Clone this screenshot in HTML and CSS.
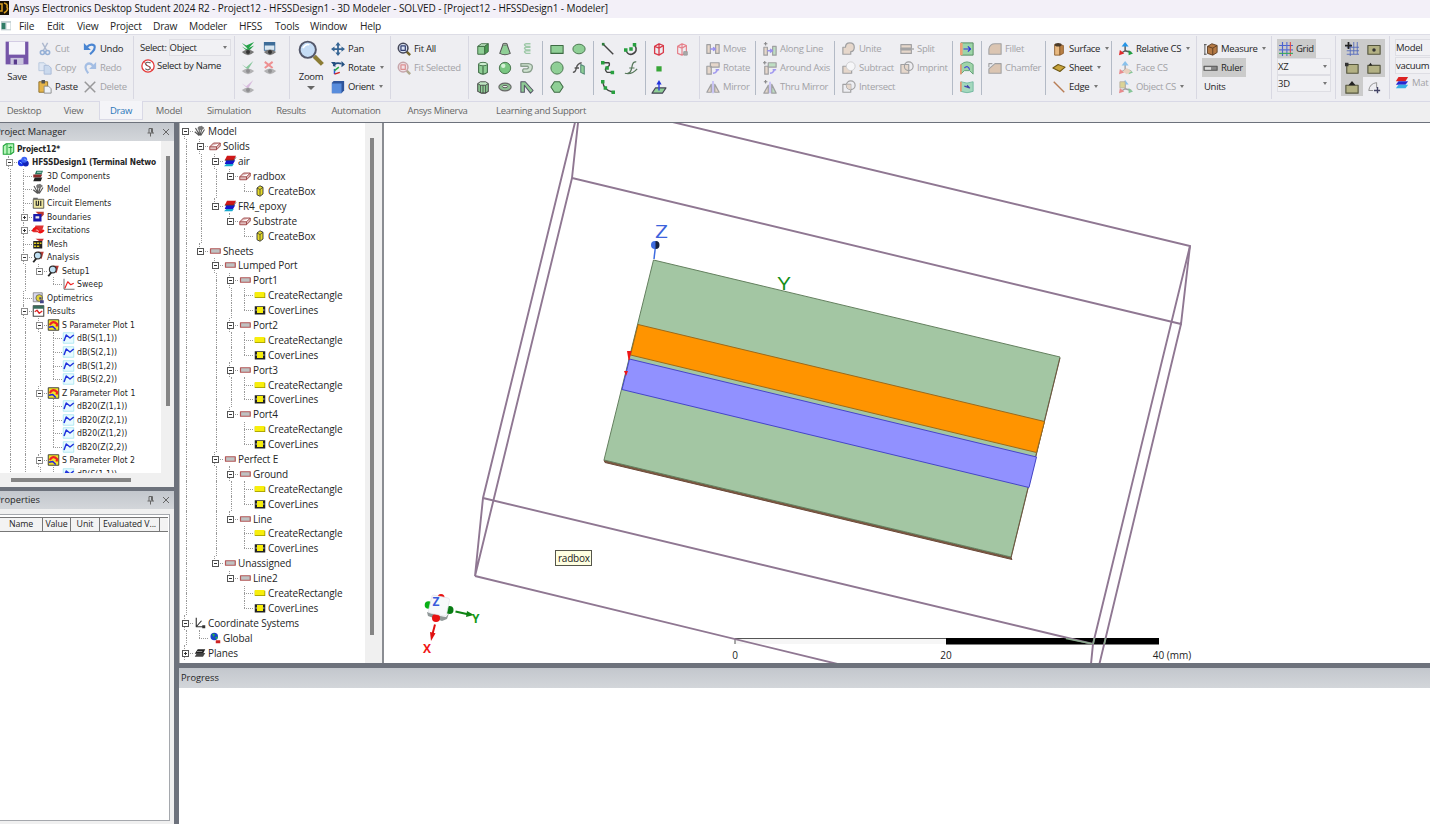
FILE: index.html
```html
<!DOCTYPE html>
<html lang="en">
<head>
<meta charset="utf-8">
<title>Ansys Electronics Desktop Student 2024 R2</title>
<link rel="stylesheet" href="styles.css">
</head>
<body>
<header class="titlebar"><svg class="applogo" viewBox="0 0 9 14"><path d="M0 0h9v14H0z" fill="#171006"/><path d="M0 3h2v7H0M4 2q4 1 3 4q2 3-3 6" fill="none" stroke="#d59b22" stroke-width="1.6"/></svg><span data-fit="595">Ansys Electronics Desktop Student 2024 R2 - Project12 - HFSSDesign1 - 3D Modeler - SOLVED - [Project12 - HFSSDesign1 - Modeler]</span></header>
<nav class="menubar" data-ref="Modeler" data-refw="38"></nav>
<section class="ribbon" data-ref="Select by Name" data-refw="64"></section>
<nav class="tabs" data-ref="Learning and Support" data-refw="90"></nav>
<main class="work">
  <aside class="left">
    <section class="panel pm">
      <h2 class="phead"><span>Project Manager</span><svg viewBox="0 0 26 10"><path d="M4 1.500h3.500v4.500M4 1.500v4.500M2.500 6h6.500M5.500 6v3.500M6.500 1.500v4"/><path d="M18 2l6 6M24 2l-6 6"/></svg></h2>
      <div class="pmbody">
        <div class="tree pmtree" data-ref="S Parameter Plot 1" data-refw="73"></div>
        <div class="vbar"><i></i></div>
        <div class="hbar"><i></i></div>
      </div>
    </section>
    <section class="panel props">
      <h2 class="phead"><span>Properties</span><svg viewBox="0 0 26 10"><path d="M4 1.500h3.500v4.500M4 1.500v4.500M2.500 6h6.500M5.500 6v3.500M6.500 1.500v4"/><path d="M18 2l6 6M24 2l-6 6"/></svg></h2>
      <div class="pbody">
        <div class="thead"><span class="c1">Name</span><span class="c2">Value</span><span class="c3">Unit</span><span class="c4">Evaluated V...</span><span class="c5"></span></div>
      </div>
    </section>
  </aside>
  <div class="right">
    <div class="editor">
      <div class="modelpane">
        <div class="tree mtree" data-ref="CreateRectangle" data-refw="74.500"></div>
        <div class="vbar"><i></i></div>
      </div>
      <svg class="view" viewBox="384 123 1046 540">
        <g class="board">
          <path d="M604 460L1011 557.500L1012 559.500L605 462.500Z" fill="#7d5940" stroke="#6b4a3a"/>
          <path d="M653.500 260L1060 357L1011 557L604 460Z" fill="#a3c6a3" stroke="#64805f"/>
          <path d="M1060 358L1011 558" stroke="#71553f" fill="none"/>
          <path d="M638 324.500L1044.500 421.500L1036.500 452.500L630.500 355Z" fill="#ff9400" stroke="#9a6a1c"/>
          <path d="M629.500 359L1036.500 457L1029 487.500L622 389.500Z" fill="#9191ff" stroke="#4646c8"/>
          <path d="M627 351h4.500l-2 9h-1zM624 371h4l-2 5z" fill="#f01616"/>
        </g>
        <path class="dir z" d="M654 259L655.500 246"/>
        <circle cx="655" cy="245" r="4" fill="#3d6be0"/><path d="M655.500 241a4 4 0 0 1 0 8z" fill="#16213f"/>
        <text x="655" y="238" class="ax zc" textLength="13" lengthAdjust="spacingAndGlyphs">Z</text>
        <text x="777.500" y="290" class="ax yc" textLength="13" lengthAdjust="spacingAndGlyphs">Y</text>
        <path d="M735 638.500H946V644H735z" fill="#f6f6f6"/>
        <path d="M735 644V638.500H946" fill="none" stroke="#555"/>
        <path d="M946 638H1159V644.500H946z"/>
        <g class="wire">
          <path d="M580.500 100L572 178L1181 324L1190 246L580.500 100L483 498L475 576L572 178"/>
          <path d="M1190 246L1093 644L1085 724L1181 324"/>
          <path d="M483 498L1093 644M475 576L1085 724"/>
        </g>
        <path d="M1066 638.500L1092 643.800" stroke="#88a98b" stroke-width="1.500"/>
        <path d="M1094.500 638l-1.500 6M1105.700 638l-1.500 6" stroke="#88a98b" stroke-width="1.500"/>
        <g class="rl" text-anchor="middle"><text x="735" y="659">0</text><text x="946" y="659">20</text><text x="1172" y="659">40 (mm)</text></g>
        <rect x="555.500" y="550.500" width="36" height="15" fill="#ffffe1" stroke="#55554a"/>
        <text x="558" y="562" class="tip" textLength="32">radbox</text>
        <g>
          <circle cx="428.500" cy="605" r="3.800" fill="#08b016"/><circle cx="441" cy="597.500" r="3.500" fill="#e81212"/>
          <circle cx="449.500" cy="610" r="4" fill="#087c14"/><path d="M427 612l13 4 6 1 3-4-2 6-5 2-14-5z" fill="#8f9797"/>
          <circle cx="436" cy="618" r="4" fill="#e81212"/>
          <path d="M433 595l15 3q2 .5 1.500 2.500l-3 14q-.5 2-2.500 1.500l-14-3q-2-.5-1.500-2.500l3-13q.5-2.500 1.500-2.500z" fill="#f7f9fb" stroke="#dfe3e8" stroke-width=".7"/>
          <text x="432.500" y="606" class="cube">Z</text>
          <path d="M455.500 611.500L469 614.500" stroke="#108414" stroke-width="2"/><path d="M467 611l7 4-8 2z" fill="#108414"/>
          <text x="472" y="622.500" class="tri" fill="#129a18">Y</text>
          <path d="M435 624.500L432.500 634" stroke="#e01010" stroke-width="2"/><path d="M430 632l5.500 1.200L431 641z" fill="#e01010"/>
          <text x="423" y="653" class="tri" fill="#f01414">X</text>
        </g>
      </svg>
    </div>
    <section class="progress"><h2 class="phead"><span>Progress</span></h2></section>
  </div>
</main>
<script src="app.js"></script>
</body>
</html>
```

FILE: styles.css
```css
*{box-sizing:border-box}
html,body{margin:0;height:100%}
body{width:1430px;height:824px;overflow:hidden;display:flex;flex-direction:column;font:9.5px "Open Sans","Noto Sans",sans-serif;color:#252525;background:#fff}
svg{display:block;flex:none;overflow:visible}
.titlebar{height:18px;flex:none;background:#f3f0f8;display:flex;align-items:center;gap:4px;font-size:10px;white-space:nowrap;color:#151515;padding-bottom:2px}
.applogo{width:9px;height:14px}
.menubar{height:16px;flex:none;background:#fff;display:flex;align-items:center;font-size:10.2px}
.menubar svg{width:12px;height:10px;margin-right:7px}
.ribbon{height:68px;flex:none;background:#eeeef2;border-top:1px solid #dddde6;border-bottom:1px solid #d9d9e6;display:flex;padding-top:4px;white-space:nowrap}
.col{flex:none;display:flex;flex-direction:column}
.item{height:19px;display:flex;align-items:center;gap:3px}
.item svg,.icon{width:14px;height:14px}
.item.off{color:#a2a2a6}
.item.off svg{opacity:.5}
.item i{border:2px solid transparent;border-top:3px solid #777;border-bottom:0;margin:-1px 0 0 1.500px}
.sep,.gsep{flex:none}
.sep::before{content:"";display:block;width:1px;height:54px;background:#b3bac6;margin-top:2px}
.gsep::before{content:"";display:block;width:1px;height:63px;background:#d8d8e2;margin-top:-3px}
.big{align-items:center;padding-top:1px}
.big svg{width:26px;height:26px}
.big span{margin-top:4px}
.big i{border:4px solid transparent;border-top:4px solid #666;border-bottom:0;margin-top:3px}
.select{display:flex;align-items:center;height:17px}
.combo{display:flex;align-items:center;justify-content:space-between;height:17px;border:1px solid #dedee4;background:#f1f1f4;padding:0 3px 0 0}
.combo i{border:2px solid transparent;border-top:3px solid #777;border-bottom:0}
.select .combo{width:62px;margin-left:2px}
.byname{margin:0 0 0 1px}
.byname span{margin-left:-1px}
.hl{background:#cbcbcb}
.gridcol .item.hl{width:39px;padding-left:2px}
.gridcol .combo{width:54px}
.ruler{width:44px;margin-left:-2px;padding-left:2px}
.pads{display:grid;grid-template-columns:22px 22px}
.pads b{height:19px;display:flex;align-items:center;justify-content:center}
.matcol{gap:1px}
.matcol .combo{width:50px;height:17px}
.matcol .item{height:15px}
.tabs{height:20px;flex:none;background:#efeff0;display:flex;color:#666;font-size:9.500px;white-space:nowrap;line-height:17px;text-align:center}
.tabs span{flex:none}
.tabs .on{color:#2a76b8;background:#f4f4f8;border:1px solid #d9d9e6;border-top:0;margin-top:-1px;height:19px;line-height:19px}
.work{flex:1;min-height:0;display:flex;background:#6d727c}
.left{width:174px;margin-right:5px;display:flex;flex-direction:column;gap:4px;padding-top:1px}
.panel{background:#f0f0f0;display:flex;flex-direction:column}
.pm{height:364px}
.props{flex:1}
.phead{margin:0;height:18px;flex:none;font:inherit;font-size:9.300px;background:linear-gradient(#c3c7cd,#d3d6da);display:flex;align-items:center;justify-content:space-between;padding:0 3px 1px 2px}
.phead svg{width:26px;height:10px;fill:none;stroke:#666;stroke-width:1}
.left .phead span{margin-left:-7px}
.pmbody{display:grid;grid-template-columns:161px 13px;grid-template-rows:332px 14px}
.pmtree{background:#fff;font:8.600px "DejaVu Sans Condensed","DejaVu Sans",sans-serif;--row:13.55px;--start:2px;padding-top:1px}
.tree{overflow:hidden}
.row{height:var(--row);display:flex;align-items:center;white-space:nowrap}
.row::before{content:"";width:var(--start);flex:none;margin-left:var(--pull,0)}
.row.b span{font-weight:bold;font-size:8.300px;letter-spacing:-.12px}
.row .icon{margin-right:2px;width:13px;height:12px}
.cell{width:15px;align-self:stretch;flex:none;display:grid;grid-template:1fr 1fr/1fr 1fr;position:relative}
.cell.up::before{content:"";grid-area:1/2;border-left:1px dotted #999}
.cell.dn::after{content:"";grid-area:2/2;border-left:1px dotted #999}
.cell u{grid-area:2/2;border-top:1px dotted #999;height:1px;width:9px}
.cell b{position:absolute;left:4px;top:calc(50% - 3px);width:7px;height:7px;border:1px solid #8d8d8d;background:linear-gradient(#333,#333) center/3px 1px no-repeat #fff}
.cell b.plus{background:linear-gradient(#333,#333) center/3px 1px no-repeat,linear-gradient(#333,#333) center/1px 3px no-repeat,#fff}
.vbar{padding:15px 0 0 5px}
.pm .vbar i{display:block;width:4px;height:250px;background:#858585}
.hbar{padding:5px 0 0 11px;grid-column:1/3}
.hbar i{display:block;width:120px;height:4px;background:#858585}
.pbody{flex:1;background:#fff;margin:5px 4px 3px 0;border:1px solid #a5a8ad;border-left:0;padding-top:2px}
.thead{display:flex;height:15px;font-size:8.800px;background:#f3f3f3;border:1px solid #777;border-left:0;border-right:0;text-align:center;line-height:13px;white-space:nowrap;width:168px}
.thead span{border-right:1px solid #777;letter-spacing:-.1px}
.c1{width:43px}.c2{width:28px}.c3{width:29px}.c4{width:60px}.thead .c5{border:0}
.right{flex:1;min-width:0;display:flex;flex-direction:column;gap:5px;padding-top:1px}
.editor{height:540px;display:flex;background:#fff;border-left:1px solid #bbb}
.modelpane{width:204px;flex:none;display:flex;background:#f0f0f0;border-right:2px solid #8a8d92}
.mtree{width:185px;background:#fff;font-size:10px;--row:14.900px;--start:0px;--pull:-2px;padding-top:1px}
.mtree .cell b{border-color:#555}
.mtree .row .icon{margin-right:1px;width:14px}
.modelpane .vbar i{display:block;width:4px;height:497px;background:#858585}
.view{width:1046px;height:540px;overflow:hidden}
.board path{stroke-width:1}
.wire{fill:none;stroke:#8f7792;stroke-width:1.900}
.dir{stroke:#3d6be0;stroke-width:1.500}
.ax{font:19px "Open Sans",sans-serif}
.zc{fill:#3d63dc}.yc{fill:#159018}
.cube{font:bold 12px "Open Sans",sans-serif;fill:#3a5bdc}
.tri{font:bold 12px "Open Sans",sans-serif}
.rl{font:10px "Open Sans",sans-serif;fill:#222}
.tip{font:10px "Open Sans",sans-serif;fill:#222}
.progress{flex:1;background:#fff}
.progress .phead{height:20px}
```

FILE: app.js
```js
const G = '#8fcf96', D = '#3e6b44';
const line = (d, c = '#555', w = 1.3, f = 'none') => `<path d="${d}" fill="${f}" stroke="${c}" stroke-width="${w}" stroke-linejoin="round"/>`;
const fill = (d, c) => `<path d="${d}" fill="${c}"/>`;
const eye = fill('M1 11.500q7-6 14 0q-7 7-14 0', '#777') + '<circle cx="8" cy="11.500" r="2.300" fill="#333"/>';
const tan = '#e0c2a5';
const cs = line('M7 10V2M7 10l7 2M7 10l-5 3', '#555', 1.6) + fill('M7 0l4 5H3z', '#2596e8') + fill('M16 13l-5-4v6z', '#20a040') + fill('M0 15l1-6 5 4z', '#e32a2a');
const box3 = (a, b, c) => line('M2 5l4-3h8l-4 3z', a, 1.1, '#c4ecc7') + line('M2 5h8v9H2z', a, 1.1, c) + line('M10 5l4-3v9l-4 3z', a, 1.1, b);
const ICONS = {
  save: fill('M1 1h14v14H1z', '#7555a8') + fill('M3 1h10v8H3z', '#f5f5fa') + fill('M4 11h8v4H4z', '#c9c4dd') + fill('M6 12h2v3H6z', '#57398b'),
  cut: line('M5 1l5 9M11 1L6 10', '#6d83ac', 1.6) + '<circle cx="5" cy="12" r="2.300" fill="none" stroke="#3e73bb" stroke-width="1.800"/><circle cx="11" cy="12" r="2.300" fill="none" stroke="#3e73bb" stroke-width="1.800"/>',
  copy: line('M1 2h6l2 2v7H1z', '#7d9fc8', 1, '#cfe0f4') + line('M7 5h5l3 3v7H7z', '#6286bb', 1, '#a7c5ea'),
  paste: line('M1 2h10v12H1z', '#8a6a25', 1, '#e6b54b') + fill('M4 0h4v4H4z', '#555') + line('M7 7h5l3 3v5H7z', '#888', 1, '#eef2f8'),
  undo: line('M4 6q5-5 9-2q2 4-5 10', '#4a85d2', 2.500) + fill('M1 1v8h8z', '#4a85d2'),
  redo: line('M12 6Q8 1 4 4q-3 4 2 10', '#5d90d8', 2.500) + fill('M15 1v8H7z', '#5d90d8'),
  del: line('M2 2l12 12M14 2L2 14', '#444', 1.700),
  sname: '<circle cx="8" cy="8" r="7" fill="#fff" stroke="#e43b3b" stroke-width="1.500"/>' + line('M11 4.500q-5-2-6 1q1 2 3 2.500q4 1 2 3.500q-3 2-5-.5', '#666', 1.400) + line('M3 3l10 10', '#e43b3b', .8),
  eyeA: fill('M1 1l5 3 9-4-7 8z', '#22a247') + fill('M1 5l5 3 9-4-7 7z', '#22a247') + eye,
  eyeB: fill('M1 0h13v10H1z', '#3d6c98') + fill('M2 4h11v5H2z', '#dae7f1') + eye,
  eyeC: fill('M1 4l5 3 8-7-6 10z', '#22a247') + eye, eyeD: line('M2 1l9 7M11 1L2 8', '#e33', 2.2) + eye, eyeE: fill('M1 4l5 3 8-7-6 10z', '#c48acc') + eye,
  zoom: line('M10 10l5 5', '#8b7c35', 2.600) + '<circle cx="6" cy="6" r="5" fill="#c5dcf5" stroke="#53576a" stroke-width="1.200"/>' + line('M3 5q2-3 4-2', '#fff', 1),
  pan: line('M8 2v12M2 8h12', '#356493', 2) + fill('M8 0l3 4H5zM8 16l3-4H5zM0 8l4-3v6zM16 8l-4-3v6z', '#356493'),
  rot: line('M3 6q1-5 9-3', '#234f80', 2) + fill('M0 1h5v6zM12 0l4 4-4 3z', '#234f80') + line('M4 15V9', '#2b55dc', 1.700) + line('M4 15l6-2', '#c22', 1.700) + line('M4 11l5-4', '#2a4', 1.500),
  orient: fill('M3 1h12v11l-3 3H1V3z', '#2f559b') + fill('M1 4h11v11H1z', '#588cdc'),
  fit: line('M11 11l4 4', '#73642b', 2.800) + '<circle cx="7" cy="7" r="5.500" fill="#dbe4f5" stroke="#454759" stroke-width="1.800"/>' + line('M4.500 4.500h5v5h-5z', '#333f72', 1.400),
  fits: line('M11 11l4 4', '#73642b', 2.800) + '<circle cx="7" cy="7" r="5.500" fill="#f3d5dc" stroke="#a06067" stroke-width="1.800"/>' + line('M4.500 4.500h5v5h-5z', '#c33', 1.400),
  box: box3(D, '#4b9c53', G), cone: line('M6 2h4l4 11q-6 3-12 0z', '#555', 1.2, G) + '<ellipse cx="8" cy="2.500" rx="2.500" ry="1" fill="#d3efd5" stroke="#555"/>',
  helix: line('M12 2H7q-4 1 0 3h5M12 6H7q-4 1 0 3h5M12 10H7q-4 1 0 3h5', '#9fc9a9', 1.500),
  cyl: line('M3 3v10q5 4 10 0V3', D, 1.2, G) + '<ellipse cx="8" cy="3.500" rx="5" ry="2" fill="#cdeed0" stroke="#3e6b44"/>' + line('M8 6v9', D),
  sph: '<circle cx="8" cy="8" r="6.500" fill="#79c681" stroke="#3e6b44"/><circle cx="6" cy="5.500" r="2.500" fill="#d5f2d7"/>',
  spiral: line('M1 3h9q5 1 4 5q-1 5-6 5H4q-2-2 0-4h4q3-1 1-3H1z', '#8a9f8d', 1.500, '#cfe3d1'),
  prism: line('M2 4v9l4 2h5l3-2V4', '#444', 1.2, G) + line('M2 4l3-2h6l3 2-3 2H5zM5 6v9M8 6v9M11 6v9', '#444', 1, '#bfe5c2'),
  torus: '<ellipse cx="8" cy="8" rx="7" ry="4.500" fill="#8dbf91" stroke="#666" stroke-width="1.300"/><ellipse cx="8" cy="7.500" rx="3" ry="1.300" fill="#eee" stroke="#555"/>',
  sweep: line('M1 14V2h5l9 10-3 3L5 6v8z', '#556', 1.2, '#8fcb95'),
  rect: line('M1 4h14v9H1z', D, 1.200, G), ell: '<ellipse cx="8" cy="8" rx="7" ry="5.500" fill="#8fcf96" stroke="#3e6b44"/>',
  circ: '<circle cx="8" cy="8" r="7" fill="#8fcf96" stroke="#3e6b44"/>', surf: line('M1 13q3 0 4-5t6-6M3 8h5', '#555', 1.500) + line('M10 4l4 2v9l-4-2z', '#587', 1.2, G),
  hex: line('M5 2h6l4 6-4 6H5L1 8z', D, 1.200, G),
  ln: line('M2 2l12 12', '#444', 1.600) + fill('M1 1h3v3H1z', '#2c7a3a'),
  arc: line('M12 3q5 8-3 11Q4 15 2 9', '#444', 1.700) + fill('M10 1h4v4h-4zM6 6h4v4H6zM0 7h4v4H0z', '#28a040'),
  spl: line('M2 2h7q2 3-2 5t0 6h6', '#444', 1.600) + fill('M0 0h4v4H0zM5 6h4v4H5zM11 11h4v4h-4z', '#28a040'),
  eq: line('M14 1q-4-1-5 6t-5 7M6 8h6M1 14q8 2 14-5', '#557659', 1.400),
  arc3: line('M2 2q1 10 12 12', '#444', 1.600) + fill('M0 0h4v4H0zM3 7h4v4H3zM12 12h4v4h-4z', '#28a040'),
  rbox: line('M3 5l5-3 5 2v8l-5 3-5-2zM3 5l5 2 5-3M8 7v8M8 2v5', '#d93a49', 1.500), pt: fill('M5 6h6v6H5z', '#38a638'),
  rboxo: line('M3 5l5-3 5 2v8l-5 3-5-2zM3 5l5 2 5-3M8 7v8M8 2v5', '#e6828c', 1.400) + line('M10 11h4v4h-4z', '#999', 1, '#aaa'),
  plane: line('M0 15l4-6h12l-4 6z', '#445', 1.200, G) + line('M8 12V3', '#34d', 1.700) + fill('M8 0l3 5H5z', '#23d'),
  move: line('M1 3h4v10H1zM11 3h4v10h-4z', '#555', 1.400, tan) + line('M5 8h5M8 6l3 2-3 2', '#43e', 1.500),
  rotate: line('M1 6h5v9H1zM5 2h10v5H5z', '#555', 1.400, tan) + line('M8 14q5-1 5-5M11 10h4', '#54e', 1.700),
  mirror: line('M6 5v9H1zM10 5v9h5z', '#555', 1.400, tan) + line('M8 1v14', '#65f', 1.200),
  along: line('M1 6h4v9H1z', '#555', 1.400, tan) + line('M11 5h4v10h-4z', '#555', 1.400, G) + line('M5 10h5M8 8l3 2-3 2', '#43e', 1.500) + line('M3 0v4M1 2h4', '#222', 1.200),
  around: line('M2 6h4v9H2z', '#555', 1.400, tan) + line('M6 2h9v5H6z', '#555', 1.400, G) + line('M8 14q5-1 5-5M11 10h4', '#54e', 1.700) + line('M2 0v4M0 2h4', '#222', 1.200),
  thru: line('M6 6v9H1z', '#555', 1.400, tan) + line('M10 5v10h5z', '#555', 1.400, G) + line('M8 2v13', '#65f', 1.200) + line('M3 0v4M1 2h4', '#222', 1.200),
  unite: line('M1 6h3q0-5 5-5t5 5q0 5-4 5v3H1z', '#555', 1.400, tan),
  sub: line('M1 6h10v8H1z', '#555', 1.400, tan) + '<circle cx="10" cy="6" r="5" fill="#fff" stroke="#aaa"/>',
  inter: line('M1 5h9v9H1z', '#555') + '<circle cx="10" cy="6" r="5" fill="none" stroke="#555" stroke-width="1.300"/>' + fill('M5 5h5v6q-5-1-5-6', tan),
  split: line('M1 3h12v4H1zM1 9h12v4H1z', '#555', 1.300, tan) + line('M0 8h16', '#444'),
  imprint: line('M1 4h9v10H1z', '#555', 1.300, tan) + '<circle cx="10" cy="6" r="5" fill="none" stroke="#555" stroke-width="1.300"/>',
  s1: line('M1 1h14v14H1z', '#4c8358', 1, '#9dd5a8') + fill('M0 1h3v14H0z', '#eda27a') + line('M4 8h8M9 5l3 3-3 3', '#33d', 1.400),
  s2: line('M1 4q7-6 14 0v11l-4-4H5l-4 4z', '#5c9b72', 1, '#9fd4a9') + line('M1 4v11', '#e49b77', 2) + line('M5 8q4-4 6 2', '#44d', 1.300),
  s3: line('M1 2q7 3 14 0v11q-7 3-14 0z', '#6fb69f', 1, '#a3d8bd') + line('M1 2v11', '#e49b77', 2) + line('M5 7l6 2-3-3', '#44a', 1.300),
  fillet: line('M1 14V8q1-6 7-6h7v12z', '#555', 1.200, '#c99e74'), chamfer: line('M1 14V9l7-6h7v11z', '#555', 1.200, '#c99e74') + line('M1 7V3h4', '#555'),
  surface: line('M3 3h6v12H3z', '#8a5b2d', 1, '#e8b981') + line('M9 3l4 1v9l-4 2z', '#8a5b2d', 1, '#b98045') + '<ellipse cx="7" cy="3" rx="4" ry="2" fill="#4b3a28"/>',
  sheet: line('M1 8l6-4 8 3-6 5z', '#6d5715', 1.200, '#c9a43c'), edge: line('M2 2l12 12', '#b87d55', 1.600),
  rcs: cs, fcs: cs + fill('M4 12l5-4 5 4-5 3z', '#e7b48c'), ocs: cs + line('M1 2h6v7H1z', '#875', 1, '#cabb3a'),
  measure: line('M1 3v11M0 3h3M0 14h3', '#444', 1) + line('M4 5l5-3 6 2v8l-5 3-6-2z', '#5a3a20', 1, '#b57a45') + line('M4 5l6 2 5-3M10 7v8', '#5a3a20', 1),
  ruler: line('M0 6h15v4.500H0z', '#555', 1.200, '#888') + fill('M1 7h7v3H1z', '#ddd'),
  grid: line('M4 0v16M0 4h16', '#4b62d0') + line('M9 0v16M0 9h16', '#5970d2') + line('M13 0v16', '#e04b4b') + line('M0 13h16', '#39a75e'),
  g1: line('M6 2v14M10 0v14M14 0v14M2 6h14M2 10h14M2 14h14', '#5369bd', 1) + line('M4 0v8M0 4h8', '#222', 2),
  g2: line('M1 4h14v10H1z', '#55563f', 1.300, '#b3b184') + '<circle cx="8" cy="9" r="2" fill="#333"/>',
  g3: line('M2 4h13v10H2z', '#55563f', 1.300, '#b3b184') + fill('M0 2h4v4H0z', '#333'), g4: line('M1 5h14v9H1z', '#55563f', 1.300, '#b3b184') + fill('M4 2l2 3H2z', '#222'),
  g5: line('M1 6h14v9H1z', '#55563f', 1.300, '#b3b184') + fill('M8 1l4 5H4z', '#222'), g6: line('M2 12q1-8 9-9v6M2 12h5', '#888', 1) + line('M12 8v7M8 12h7', '#446', 1.600),
  mat: fill('M4 1h11l-3 5H1z', '#dc2222') + fill('M4 6h11l-3 4H1z', '#2628cf') + fill('M4 10h11l-3 4H1z', '#36afe5'),
  win: fill('M0 0h16v15H0z', '#c5d2d5') + fill('M1 3h6v10H1z', '#2f7c66') + fill('M9 3h6v10H9z', '#fff'),
  proj: line('M1 4l4-3h10v11l-4 3H1z', '#22a43a', 1.400, '#b5f5b8') + line('M6 1v14M11 4v11M8 6h5', '#22a43a', 1.300),
  hfss: '<circle cx="5" cy="9" r="4.500" fill="#1632e8"/><circle cx="11" cy="10" r="4" fill="#1122b5"/><circle cx="9" cy="5" r="4" fill="#3c62f5"/>' + line('M3 8l3 2M9 4l3 2', '#9cf', 1.200),
  comp: fill('M5 1h9l-2 5H3z', '#28765f') + fill('M1 6h12l-2 4H1z', '#8e2b2b') + fill('M3 10h10l-2 5H1z', '#222') + line('M6 3h6', '#dfe', 1),
  model: line('M2 4l5 9M7 2v12M11 3L8 14M14 6l-5 8M1 9l6 5', '#555', 1.500) + fill('M5 3l5-2 4 3-4 3-5-1z', '#777'),
  circuit: line('M1 3h14v12H1z', '#333', 1, '#eee7a0') + line('M5 5v6h3V5M11 5v7', '#222', 1.500) + fill('M1 1h6v2H1z', '#666'),
  bound: fill('M4 1h11v4l-3 3z', '#bc3a30') + fill('M1 4h11v10H1z', '#1a19aa') + fill('M4 7h5v3H4z', '#eee'),
  exc: fill('M4 2h11l-3 9H1z', '#d33') + line('M0 10q4-8 7-2t8 0', '#e11', 3) + line('M5 8q2-1 3 2', '#fff', 1),
  mesh: fill('M4 1h11l-3 5z', '#c33') + fill('M1 4h12v10H1z', '#222') + fill('M2 6h3v2H2zM6 6h3v2H6zM2 10h3v2H2zM6 10h3v2H6zM10 6h2v2h-2z', '#dcca22'),
  analysis: fill('M7 1h8l-3 10z', '#b93a35') + '<circle cx="7" cy="6" r="4.500" fill="#bfe0f3" stroke="#333" stroke-width="1.500"/>' + line('M5 10l-4 5', '#222', 2.500),
  plot: line('M2 1v14h14', '#444', 1) + line('M3 14L7 5l4 4 4-2', '#e22', 1.500),
  opt: line('M1 1h12v12H1z', '#777', 1, '#d8d8ee') + '<circle cx="9" cy="8" r="4.500" fill="#e3d43a" stroke="#555"/>' + fill('M9 7h3v3H9zM10 11h5v4h-5z', '#448'),
  results: line('M1 1h14v14H1z', '#444', 1.400, '#fff') + fill('M1 1h14v4H1z', '#386c5b') + line('M3 9l3-2 3 4 4-3', '#d22', 1.800),
  spp: line('M1 1h14v14H1z', '#333', 1.200, '#f2e527') + line('M3 8q4-7 10-1l-1 3', '#e22', 3) + line('M2 11l5-1 4 4', '#22d', 2),
  trace: line('M1 1h14v14H1z', '#9fe3ee', 1, '#e8fbff') + line('M2 12l3-8 5 4 5-4', '#23d', 2),
  solid: line('M1 9l5-5h9l-5 5zM1 9v4h9l5-5V4M10 9v4', '#9c4343', 1.200, '#e0bcbc'),
  stack: fill('M4 1h12l-3 6H1z', '#d01818') + fill('M3 7h12l-3 5H1z', '#1515cc') + fill('M3 12h10l-2 3H0z', '#17a8ce') + line('M1 7h12l3-4', '#222', .9),
  cbox: line('M4 4l4-3 4 2v9l-4 3-4-2z', '#333', 1.200, '#e8dc28') + line('M4 4l4 2 4-3M8 6v8', '#333', 1),
  sh: line('M2 5h13v6H2z', '#b45757', 1.600, '#bfc2c2'), crect: fill('M1 5h14v7H1z', '#999200') + fill('M1 4h13v7H1z', '#f8ee0c'),
  cover: fill('M1 3h14v11H1z', '#222') + fill('M4 4h8v8H4z', '#f8ee0c') + line('M2 8h2M12 8h2', '#fff', 1),
  coord: line('M3 1v12h10M3 13l7-8', '#333', 1.500) + fill('M11 11h4v4h-4z', '#333'),
  global: '<circle cx="7" cy="6" r="5" fill="#1846ca"/>' + fill('M4 2l4 1-2 4zM8 7l4-1-2 4z', '#25ad48') + fill('M9 11h6v4H9z', '#c22'),
  planes: fill('M5 3h10l-3 6H1z', '#222') + fill('M4 8h11l-3 5H1z', '#444') + line('M4 6h7', '#aaa', 1)
};
const icon = n => `<svg class="icon" viewBox="0 0 16 16">${ICONS[n]}</svg>`;

// Item syntax: icon|label|flags, where o = disabled and a = drop-down arrow.
const item = s => {
  const [ic, label = '', fl = ''] = s.split('|');
  return `<div class="item${fl.includes('o') ? ' off' : ''}${fl.includes('r') ? ' hl ruler' : ''}${fl.includes('g') ? ' hl' : ''}${fl.includes('n') ? ' byname' : ''}">${ic ? icon(ic) : ''}${label ? `<span>${label}</span>` : ''}${fl.includes('a') ? '<i></i>' : ''}</div>`;
};
const cols = (...a) => a.map(item).join('');
const combo = t => `<div class="combo"><span>${t}</span><i></i></div>`;
const ribbon = [
  [0, ''], [4, icon('save') + '<span>Save</span>', 'big', 26], [38, cols('cut|Cut|o', 'copy|Copy|o', 'paste|Paste')], [83, cols('undo|Undo', 'redo|Redo|o', 'del|Delete|o')],
  [133, 'G'], [140, `<div class="select"><span>Select:</span>${combo('Object')}</div>` + cols('sname|Select by Name|n')],
  [234, 'G'], [241, cols('eyeA', 'eyeC||o', 'eyeE||o')], [263, cols('eyeB', 'eyeD||o')],
  [289, 'G'], [298, icon('zoom') + '<span>Zoom</span><i></i>', 'big', 26], [331, cols('pan|Pan', 'rot|Rotate|a', 'orient|Orient|a')],
  [390, 'G'], [397, cols('fit|Fit All', 'fits|Fit Selected|o')],
  [468, 'G'], [476, cols('box', 'cyl', 'prism')], [498, cols('cone', 'sph', 'torus')], [520, cols('helix', 'spiral', 'sweep')], [542, 'S'],
  [550, cols('rect', 'circ', 'hex')], [572, cols('ell', 'surf')], [593, 'S'], [601, cols('ln', 'spl', 'arc3')], [624, cols('arc', 'eq')], [645, 'S'],
  [652, cols('rbox', 'pt', 'plane')], [675, cols('rboxo')],
  [699, 'G'], [706, cols('move|Move|o', 'rotate|Rotate|o', 'mirror|Mirror|o')], [755, 'S'], [763, cols('along|Along Line|o', 'around|Around Axis|o', 'thru|Thru Mirror|o')], [834, 'S'],
  [842, cols('unite|Unite|o', 'sub|Subtract|o', 'inter|Intersect|o')], [900, cols('split|Split|o', 'imprint|Imprint|o')], [952, 'S'], [960, cols('s1', 's2', 's3')], [981, 'S'],
  [988, cols('fillet|Fillet|o', 'chamfer|Chamfer|o')], [1045, 'S'], [1052, cols('surface|Surface|a', 'sheet|Sheet|a', 'edge|Edge|a')], [1111, 'S'],
  [1119, cols('rcs|Relative CS|a', 'fcs|Face CS|o', 'ocs|Object CS|oa')],
  [1196, 'G'], [1204, cols('measure|Measure|a', 'ruler|Ruler|r', '|Units')],
  [1271, 'G'], [1277, cols('grid|Grid|g') + combo('XZ') + combo('3D'), 'gridcol'],
  [1335, 'G'], [1341, `<div class="pads"><b class="hl">${icon('g1')}</b><b class="hl">${icon('g2')}</b><b class="hl">${icon('g3')}</b><b class="hl">${icon('g4')}</b><b class="hl">${icon('g5')}</b><b>${icon('g6')}</b></div>`],
  [1389, 'G'], [1395, combo('Model') + combo('vacuum') + `<div class="item">${icon('mat')}<span style="color:#a2a2a6">Mat</span></div>`, 'matcol'], [1440, '']
];
document.querySelector('.ribbon').innerHTML = ribbon.slice(0, -1).map(([x, c, cls = '', w], i) => {
  const slot = ribbon[i + 1][0] - x;
  const kind = c === 'G' ? 'gsep' : c === 'S' ? 'sep' : 'col ' + cls;
  const style = w ? `width:${w}px;margin-right:${slot - w}px` : `width:${slot}px`;
  return `<div class="${kind}" style="${style}">${c.length > 1 ? c : ''}</div>`;
}).join('');

const slots = a => a.map(([t, w, c = '']) => `<span class="${c}" style="width:${w}px">${t}</span>`).join('');
document.querySelector('.menubar').innerHTML = icon('win') + slots([['File', 28], ['Edit', 30], ['View', 33], ['Project', 43], ['Draw', 36], ['Modeler', 50], ['HFSS', 36], ['Tools', 35], ['Window', 50], ['Help', 30]]);
document.querySelector('.tabs').innerHTML = slots([['Desktop', 48], ['View', 56], ['Draw', 34], ['Model', 62], ['Simulation', 58], ['Results', 66], ['Automation', 64], ['Ansys Minerva', 99], ['Learning and Support', 108]].map((t, i) => [t[0], [48, 51, 44, 52, 68, 56, 74, 89, 118][i], t[0] === 'Draw' ? 'on' : t[0] === 'View' ? 'view-tab' : '']));

// Tree rows: [level, icon, label, flag]; flag + is collapsed, - is expanded.
function tree(sel, rows, open) {
  const more = (i, k) => {
    for (let j = i + 1; j < rows.length; j++) {
      if (rows[j][0] < k) return false;
      if (rows[j][0] === k) return true;
    }
    return open.includes(k);
  };
  document.querySelector(sel).innerHTML = rows.map(([l, ic, t, f = '', b = ''], i) => {
    let s = '';
    for (let k = 1; k <= l; k++) {
      const m = more(i, k), own = k === l;
      const up = own ? i > 0 : m;
      s += `<div class="cell${up ? ' up' : ''}${m ? ' dn' : ''}">${own ? '<u></u>' + (f ? `<b class="${f === '+' ? 'plus' : ''}"></b>` : '') : ''}</div>`;
    }
    return `<div class="row ${b}">${s}${icon(ic)}<span>${t}</span></div>`;
  }).join('');
}
const traces = (p, n) => ['(1,1))', '(2,1))', '(1,2))', '(2,2))'].slice(0, n).map(x => [4, 'trace', p + x.replace(/^\(/, '(')]);
tree('.pmtree', [[0, 'proj', 'Project12*', '', 'b'], [1, 'hfss', 'HFSSDesign1 (Terminal Netwo', '-', 'b'], [2, 'comp', '3D Components'], [2, 'model', 'Model'], [2, 'circuit', 'Circuit Elements'],
  [2, 'bound', 'Boundaries', '+'], [2, 'exc', 'Excitations', '+'], [2, 'mesh', 'Mesh'], [2, 'analysis', 'Analysis', '-'], [3, 'analysis', 'Setup1', '-'], [4, 'plot', 'Sweep'], [2, 'opt', 'Optimetrics'],
  [2, 'results', 'Results', '-'], [3, 'spp', 'S Parameter Plot 1', '-'], ...traces('dB(S', 4), [3, 'spp', 'Z Parameter Plot 1', '-'], ...traces('dB20(Z', 4), [3, 'spp', 'S Parameter Plot 2', '-'], ...traces('dB(S', 1)], [1, 2, 3, 4]);
const sheet = (l, n) => [[l, 'sh', n, '-'], [l + 1, 'crect', 'CreateRectangle'], [l + 1, 'cover', 'CoverLines']];
tree('.mtree', [[1, 'model', 'Model', '-'], [2, 'solid', 'Solids', '-'], [3, 'stack', 'air', '-'], [4, 'solid', 'radbox', '-'], [5, 'cbox', 'CreateBox'], [3, 'stack', 'FR4_epoxy', '-'], [4, 'solid', 'Substrate', '-'], [5, 'cbox', 'CreateBox'],
  [2, 'sh', 'Sheets', '-'], [3, 'sh', 'Lumped Port', '-'], ...sheet(4, 'Port1'), ...sheet(4, 'Port2'), ...sheet(4, 'Port3'), ...sheet(4, 'Port4'), [3, 'sh', 'Perfect E', '-'], ...sheet(4, 'Ground'), ...sheet(4, 'Line'),
  [3, 'sh', 'Unassigned', '-'], ...sheet(4, 'Line2'), [1, 'coord', 'Coordinate Systems', '-'], [2, 'global', 'Global'], [1, 'planes', 'Planes', '+']], [1]);

// Tracking: adjust letter spacing so a sample string takes a set width.
document.querySelectorAll('[data-ref]').forEach(el => {
  const p = document.createElement('span');
  p.textContent = el.dataset.ref;
  p.style.cssText = 'position:absolute;white-space:nowrap;width:auto';
  el.append(p);
  const w = p.getBoundingClientRect().width;
  p.remove();
  el.style.letterSpacing = (el.dataset.refw - w) / el.dataset.ref.length + 'px';
});
document.querySelectorAll('[data-fit]').forEach(el => {
  el.style.letterSpacing = (el.dataset.fit - el.getBoundingClientRect().width) / el.textContent.length + 'px';
});
```
